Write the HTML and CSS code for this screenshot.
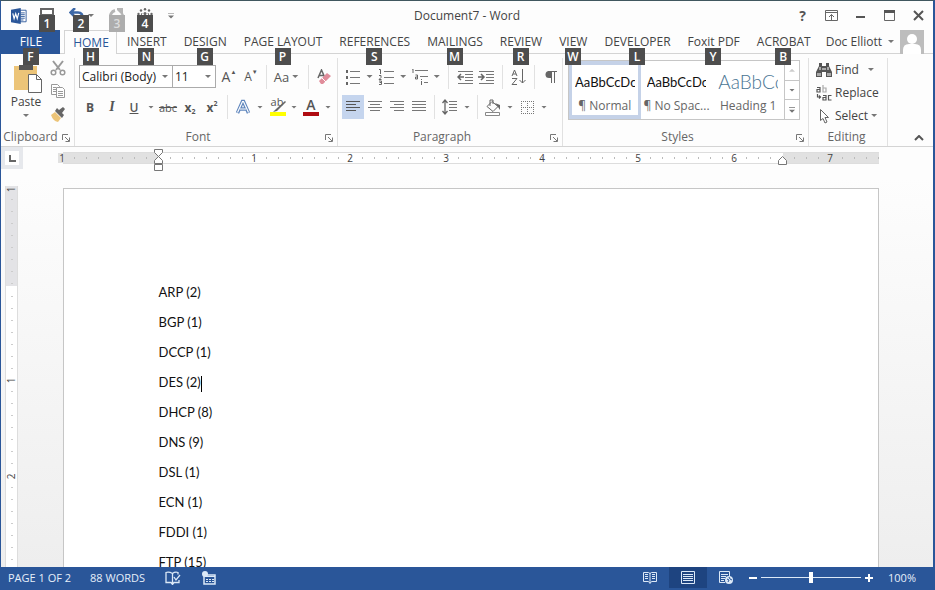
FILE: index.html
```
<!DOCTYPE html>
<html lang="en">
<head>
    <meta charset="utf-8">
    <title>Document7 - Word</title>
    <link rel="stylesheet" href="styles.css">
</head>
<body>
    <div class="window">
        <header class="titlebar">
            <div class="quick-access">
                <svg class="word-logo" width="16" height="16" viewBox="0 0 18 18">
                    <path d="M10 2.500h7v13h-7z" fill="#fff" stroke="#2a5699"/>
                    <path d="M11 5.500h4.500M11 7.500h4.500M11 9.500h4.500M11 11.500h4.500M11 13.500h3" stroke="#2a5699"/>
                    <path d="M0 2l11-2v18L0 16z" fill="#2a5699"/>
                    <path d="M2 6l1.500 6L5.300 6.500 7 12l1.700-6.500" fill="none" stroke="#fff" stroke-width="1.300"/>
                </svg>
                <button class="qa-btn" aria-label="Save">
                    <svg width="16" height="16" viewBox="0 0 16 16"><path d="M2 1h12v13H2z" fill="#fff" stroke="#666" stroke-width="2"/><path d="M3 6h10v8H3z" fill="#666"/></svg>
                    <span class="keytip">1</span>
                </button>
                <button class="qa-btn undo" aria-label="Undo">
                    <svg width="16" height="16" viewBox="0 0 16 16"><path d="M6 0L1.500 4.500 6 9M2 4.500h7c4 0 5 3 5 7" fill="none" stroke="#3c68a8" stroke-width="2.500"/></svg>
                    <span class="keytip">2</span>
                </button>
                <span class="caret"></span>
                <button class="qa-btn redo" aria-label="Redo" disabled>
                    <svg width="16" height="16" viewBox="0 0 16 16"><path d="M6 2.500a6 6 0 1 0 7 3.500" fill="none" stroke="#b5b5b5" stroke-width="3"/><path d="M8 0h6v6H12L8 2z" fill="#b5b5b5"/></svg>
                    <span class="keytip">3</span>
                </button>
                <button class="qa-btn touch" aria-label="Touch mode">
                    <svg width="16" height="16" viewBox="0 0 16 16"><g fill="#666"><circle cx="8" cy="1.200" r="1.200"/><circle cx="4" cy="2.500" r="1.200"/><circle cx="12" cy="2.500" r="1.200"/><circle cx="1.500" cy="6" r="1.200"/><circle cx="14.500" cy="6" r="1.200"/><circle cx="8" cy="5.500" r="1.500"/></g><path d="M8 6v7M5 5l-2 5M11 5l2 5" stroke="#666"/></svg>
                    <span class="keytip">4</span>
                </button>
                <button class="customize" aria-label="Customize Quick Access Toolbar"><span class="caret line"></span></button>
            </div>
            <div class="title">Document7 - Word</div>
            <div class="window-buttons">
                <button class="help" aria-label="Help">?</button>
                <button aria-label="Ribbon Display Options">
                    <svg width="13" height="11" viewBox="0 0 13 11"><path d="M.5.5h12v10H.5zM1 2.500h11M6.500 10V4.500M4 7l2.500-2.500L9 7" fill="none" stroke="#666"/></svg>
                </button>
                <button aria-label="Minimize">
                    <svg width="11" height="11" viewBox="0 0 11 11"><path d="M1 7h9" stroke="#555" stroke-width="2"/></svg>
                </button>
                <button aria-label="Maximize">
                    <svg width="11" height="11" viewBox="0 0 11 11"><path d="M.5.5h10v10H.5z" fill="none" stroke="#666"/><path d="M0 1.500h11" stroke="#555" stroke-width="3"/></svg>
                </button>
                <button aria-label="Close">
                    <svg width="11" height="11" viewBox="0 0 11 11"><path d="M1 1l9 9M10 1l-9 9" stroke="#555" stroke-width="2"/></svg>
                </button>
            </div>
        </header>

        <nav class="tabs">
            <button class="tab file">FILE<span class="keytip">F</span></button>
            <button class="tab active">HOME<span class="keytip">H</span></button>
            <button class="tab">INSERT<span class="keytip">N</span></button>
            <button class="tab">DESIGN<span class="keytip">G</span></button>
            <button class="tab">PAGE LAYOUT<span class="keytip">P</span></button>
            <button class="tab">REFERENCES<span class="keytip">S</span></button>
            <button class="tab">MAILINGS<span class="keytip">M</span></button>
            <button class="tab">REVIEW<span class="keytip">R</span></button>
            <button class="tab">VIEW<span class="keytip">W</span></button>
            <button class="tab">DEVELOPER<span class="keytip">L</span></button>
            <button class="tab">Foxit PDF<span class="keytip">Y</span></button>
            <button class="tab">ACROBAT<span class="keytip">B</span></button>
            <button class="account">Doc Elliott<span class="caret"></span>
                <svg width="24" height="24" viewBox="0 0 24 24"><path d="M0 0h24v24H0z" fill="#bdbdbd"/><circle cx="12" cy="9" r="5" fill="#fff"/><path d="M3 24v-4q0-6 6-6h6q6 0 6 6v4z" fill="#fff"/></svg>
            </button>
        </nav>

        <section class="ribbon">
            <div class="group clipboard">
                <div class="group-body">
                    <button class="paste">
                        <svg width="30" height="31" viewBox="0 0 30 31"><path d="M1 4h23v24H1z" fill="#ecc478"/><path d="M6 3h4q2.500-5 5 0h5v5H6z" fill="#555"/><path d="M15.500 12.500h8l5 5v13h-13z" fill="#fff" stroke="#666"/><path d="M23.500 12.500v5h5" fill="none" stroke="#666"/></svg>
                        <span>Paste</span>
                        <span class="caret"></span>
                    </button>
                    <div class="clip-tools">
                        <button aria-label="Cut"><svg width="16" height="16" viewBox="0 0 16 16"><path d="M3 1l7 9M13 1L6 10" stroke="#999" stroke-width="2"/><g fill="none" stroke="#999" stroke-width="1.500"><circle cx="3.500" cy="12.500" r="2.300"/><circle cx="12.500" cy="12.500" r="2.300"/></g></svg></button>
                        <button aria-label="Copy"><svg width="16" height="16" viewBox="0 0 16 16"><g fill="#fff" stroke="#999"><path d="M1.500 1.500h6l2 2v8h-8z"/><path d="M6.500 4.500h6l2 2v8h-8z"/><path d="M3 4.500h3M3 6.500h3M3 8.500h3M8 8.500h5M8 10.500h5M8 12.500h5"/></g></svg></button>
                        <button aria-label="Format Painter"><svg width="16" height="16" viewBox="0 0 16 16"><path d="M1 9l4-3 6 6-3 4q-5-1-7-7z" fill="#ecc478"/><path d="M5 5l7 7 2-3-2-2 3-4-2-2-4 3-2-2z" fill="#666"/></svg></button>
                    </div>
                </div>
                <div class="group-label">Clipboard<button class="launcher" aria-label="Clipboard settings"><svg width="8" height="8" viewBox="0 0 8 8"><path d="M.5 6V.5H6M3 3l4 4M7.500 3.500v4h-4" fill="none" stroke="#777"/></svg></button></div>
            </div>

            <div class="group font">
                <div class="group-body">
                    <div class="tool-row">
                        <label class="combo family"><select aria-label="Font"><option>Calibri (Body)</option></select></label>
                        <label class="combo size"><select aria-label="Font size"><option>11</option></select></label>
                        <button class="tool grow" aria-label="Grow Font">A<sup>&#9650;</sup></button>
                        <button class="tool shrink" aria-label="Shrink Font">A<sup>&#9660;</sup></button>
                        <span class="sep"></span>
                        <button class="tool case" aria-label="Change Case">Aa<span class="caret"></span></button>
                        <span class="sep"></span>
                        <button class="tool" aria-label="Clear Formatting"><svg width="16" height="16" viewBox="0 0 16 16"><path d="M2 9L5.500 1 9 9M3.500 6.500h4" fill="none" stroke="#666" stroke-width="1.500"/><path d="M3 12l8-8 4 3-8 8H5z" fill="#e08c9a"/><path d="M6 9l4 4" stroke="#fff"/></svg></button>
                    </div>
                    <div class="tool-row">
                        <button class="tool bold">B</button>
                        <button class="tool italic">I</button>
                        <button class="tool underline">U</button>
                        <span class="caret"></span>
                        <button class="tool strike">abc</button>
                        <button class="tool script">x<sub>2</sub></button>
                        <button class="tool script">x<sup>2</sup></button>
                        <span class="sep"></span>
                        <button class="tool" aria-label="Text Effects"><svg width="16" height="16" viewBox="0 0 16 16"><path d="M2.500 14L7.500 2.500h1L13.500 14M5 10h6" fill="none" stroke="#5f86bd" stroke-width="3.500"/><path d="M2.500 13.500L7.500 2.500h1l5 11M5 10h6" fill="none" stroke="#fff" stroke-width="1.200"/></svg></button>
                        <span class="caret"></span>
                        <button class="tool highlight" aria-label="Highlight">ab<svg width="18" height="18" viewBox="0 0 18 18"><path d="M1 14h16v4H1z" fill="#ff0"/><path d="M16 3l-9 8-3 3 4-1 9-9z" fill="#666"/></svg></button>
                        <span class="caret"></span>
                        <button class="tool color" aria-label="Font Color">A</button>
                        <span class="caret"></span>
                    </div>
                </div>
                <div class="group-label">Font<button class="launcher" aria-label="Font settings"><svg width="8" height="8" viewBox="0 0 8 8"><path d="M.5 6V.5H6M3 3l4 4M7.500 3.500v4h-4" fill="none" stroke="#777"/></svg></button></div>
            </div>

            <div class="group paragraph">
                <div class="group-body">
                    <div class="tool-row">
                        <button class="tool" aria-label="Bullets"><svg width="16" height="16" viewBox="0 0 16 16"><path d="M5 2.500h10M5 8.500h10M5 14.500h10" stroke="#777"/><path d="M1 1h2v3H1zM1 7h2v3H1zM1 13h2v3H1z" fill="#666"/></svg></button>
                        <span class="caret"></span>
                        <button class="tool" aria-label="Numbering"><svg width="16" height="16" viewBox="0 0 16 16"><path d="M6 2.500h10M6 8.500h10M6 14.500h10" stroke="#777"/><path d="M1 .5h1.500V5M1 6.500h2v2l-2 2h2.500M1 12h2.500v3.500H1M1.500 13.500h2" fill="none" stroke="#666"/></svg></button>
                        <span class="caret"></span>
                        <button class="tool" aria-label="Multilevel List"><svg width="18" height="16" viewBox="0 0 18 16"><path d="M4 1.500h13M9 7.500h8M13 13.500h4" stroke="#777"/><path d="M1 0h1v4M4.500 6h2v4h-2v-2h2M10.500 12v4M10.500 10v1" fill="none" stroke="#666"/></svg></button>
                        <span class="caret"></span>
                        <span class="sep"></span>
                        <button class="tool" aria-label="Decrease Indent"><svg width="16" height="14" viewBox="0 0 16 14"><path d="M1 1.500h15M8 4.500h8M8 7.500h8M8 10.500h8M1 13.500h15" stroke="#777"/><path d="M7 7H1.500M4 4L1 7l3 3" fill="none" stroke="#666" stroke-width="1.500"/></svg></button>
                        <button class="tool" aria-label="Increase Indent"><svg width="16" height="14" viewBox="0 0 16 14"><path d="M1 1.500h15M8 4.500h8M8 7.500h8M8 10.500h8M1 13.500h15" stroke="#777"/><path d="M0 7h5.500M3 4l3 3-3 3" fill="none" stroke="#666" stroke-width="1.500"/></svg></button>
                        <span class="sep"></span>
                        <button class="tool" aria-label="Sort"><svg width="16" height="16" viewBox="0 0 16 16"><path d="M1 7l2.500-6L6 7M2 5h3M1 9.500h5l-5 6h5M11.500 0v14M8.500 11l3 3 3-3" fill="none" stroke="#666"/></svg></button>
                        <span class="sep"></span>
                        <button class="tool" aria-label="Show marks"><svg width="12" height="14" viewBox="0 0 12 14"><path d="M6 1H4a3.500 3.500 0 0 0 0 7h2z" fill="#666"/><path d="M3 1.500h9M6.500 1v12M9.500 1v12" stroke="#666"/></svg></button>
                    </div>
                    <div class="tool-row">
                        <button class="tool selected" aria-label="Align Left"><svg width="16" height="12" viewBox="0 0 16 12"><path d="M1 .5h14M1 3.500h10M1 6.500h14M1 9.500h10" stroke="#555"/></svg></button>
                        <button class="tool" aria-label="Center"><svg width="16" height="12" viewBox="0 0 16 12"><path d="M1 .5h14M3 3.500h10M1 6.500h14M3 9.500h10" stroke="#777"/></svg></button>
                        <button class="tool" aria-label="Align Right"><svg width="16" height="12" viewBox="0 0 16 12"><path d="M1 .5h14M5 3.500h10M1 6.500h14M5 9.500h10" stroke="#777"/></svg></button>
                        <button class="tool" aria-label="Justify"><svg width="16" height="12" viewBox="0 0 16 12"><path d="M1 .5h14M1 3.500h14M1 6.500h14M1 9.500h14" stroke="#777"/></svg></button>
                        <span class="sep"></span>
                        <button class="tool" aria-label="Line Spacing"><svg width="16" height="16" viewBox="0 0 16 16"><path d="M7 2.500h8M7 5.500h8M7 8.500h8M7 11.500h8" stroke="#777"/><path d="M3 1v14M.5 4L3 1l2.500 3M.5 12L3 15l2.500-3" fill="none" stroke="#666" stroke-width="1.300"/></svg></button>
                        <span class="caret"></span>
                        <span class="sep"></span>
                        <button class="tool" aria-label="Shading"><svg width="18" height="17" viewBox="0 0 18 17"><path d="M8 2.500l6 5-5 5-6-5zM6 7V1h3v4" fill="none" stroke="#666"/><path d="M11 4l5 2v5l-2-3z" fill="#666"/><path d="M1.500 13.500h14v3h-14z" fill="#fff" stroke="#888"/></svg></button>
                        <span class="caret"></span>
                        <button class="tool" aria-label="Borders"><svg width="13" height="13" viewBox="0 0 13 13"><path d="M.5 0v13M6.500 0v13M12.500 0v13M0 .5h13M0 6.500h13M0 12.500h13" fill="none" stroke="#777" stroke-dasharray="1 1"/></svg></button>
                        <span class="caret"></span>
                    </div>
                </div>
                <div class="group-label">Paragraph<button class="launcher" aria-label="Paragraph settings"><svg width="8" height="8" viewBox="0 0 8 8"><path d="M.5 6V.5H6M3 3l4 4M7.500 3.500v4h-4" fill="none" stroke="#777"/></svg></button></div>
            </div>

            <div class="group styles">
                <div class="group-body">
                    <div class="gallery">
                        <button class="style-item current"><span class="sample">AaBbCcDc</span><span>¶ Normal</span></button>
                        <button class="style-item"><span class="sample">AaBbCcDc</span><span>¶ No Spac...</span></button>
                        <button class="style-item heading"><span class="sample">AaBbCc</span><span>Heading 1</span></button>
                        <div class="gallery-scroll">
                            <button aria-label="Row up" disabled><span class="caret up"></span></button>
                            <button aria-label="Row down"><span class="caret"></span></button>
                            <button aria-label="More"><span class="caret line"></span></button>
                        </div>
                    </div>
                </div>
                <div class="group-label">Styles<button class="launcher" aria-label="Styles settings"><svg width="8" height="8" viewBox="0 0 8 8"><path d="M.5 6V.5H6M3 3l4 4M7.500 3.500v4h-4" fill="none" stroke="#777"/></svg></button></div>
            </div>

            <div class="group editing">
                <div class="group-body">
                    <button class="edit-item"><svg width="16" height="14" viewBox="0 0 16 14"><path d="M3 0h3v3h4V0h3v3l3 6v5h-6V9H6v5H0V9l3-6z" fill="#555"/><path d="M2 10v3M4 10v3M12 10v3M14 10v3M7 5v2M9 5v2M4 4v3M12 4v3" stroke="#fff"/></svg>Find<span class="caret wide"></span></button>
                    <button class="edit-item"><svg width="16" height="16" viewBox="0 0 16 16"><g fill="none" stroke="#555" stroke-width="1.200"><path d="M1 2.500h3V7H1V4.500h3M7 10.500h3V15H7v-2.500h3M15.500 10.500h-3V15h3M1.500 9v3h3M3 10.500L4.500 12 3 13.500"/><path d="M7 0v7h3V3H7" stroke="#aaa"/></g></svg>Replace</button>
                    <button class="edit-item"><svg width="16" height="16" viewBox="0 0 16 16"><path d="M4.500 1.500v11l2.500-2 2 4.500 2-1-2-4.500h3.500z" fill="#fff" stroke="#666"/></svg>Select<span class="caret"></span></button>
                </div>
                <div class="group-label">Editing</div>
            </div>
            <button class="collapse" aria-label="Collapse the Ribbon"><svg width="10" height="6" viewBox="0 0 10 6"><path d="M1 5l4-4 4 4" fill="none" stroke="#555" stroke-width="2"/></svg></button>
        </section>

        <main class="workspace">
            <div class="left-side">
                <button class="tab-selector" aria-label="Tab stop"><svg width="7" height="7" viewBox="0 0 7 7"><path d="M1 0v6h6" fill="none" stroke="#666" stroke-width="2"/></svg></button>
                <div class="v-ruler">
                    <div class="v-inch margin"><span>1</span></div>
                    <div class="v-inch"></div>
                    <div class="v-inch"><span>1</span></div>
                    <div class="v-inch"><span>2</span></div>
                </div>
            </div>
            <div class="canvas">
                <div class="h-ruler">
                    <div class="inch margin"><span>1</span></div>
                    <div class="inch">
                        <svg class="marker" width="10" height="22" viewBox="0 0 10 22"><path d="M.5.5h8v3l-4 4-4-4zM.5 14.500v-3l4-4 4 4v3zM.5 15.500h8v6h-8z" fill="#fff" stroke="#777"/></svg>
                    </div>
                    <div class="inch"><span>1</span></div>
                    <div class="inch"><span>2</span></div>
                    <div class="inch"><span>3</span></div>
                    <div class="inch"><span>4</span></div>
                    <div class="inch"><span>5</span></div>
                    <div class="inch half"><span>6</span></div>
                    <div class="inch margin last"><span>7</span>
                        <svg class="marker right" width="10" height="22" viewBox="0 0 10 22"><path d="M.5 15.500v-4l4-4 4 4v4z" fill="#fff" stroke="#777"/></svg>
                    </div>
                </div>
                <article class="page">
                    <p>ARP (2)</p>
                    <p>BGP (1)</p>
                    <p>DCCP (1)</p>
                    <p>DES (2)<span class="cursor"></span></p>
                    <p>DHCP (8)</p>
                    <p>DNS (9)</p>
                    <p>DSL (1)</p>
                    <p>ECN (1)</p>
                    <p>FDDI (1)</p>
                    <p>FTP (15)</p>
                </article>
            </div>
        </main>

        <footer class="statusbar">
            <span>PAGE 1 OF 2</span>
            <span class="words">88 WORDS</span>
            <button class="status-btn" aria-label="Proofing"><svg width="16" height="14" viewBox="0 0 16 14"><path d="M7.500 13V2.500Q4 .5 1 1.500v10h5l1.500 2 1.500-2h5V9M7.500 2.500Q10 .5 13 1.500v2M9 6l2 3 4-5" fill="none" stroke="#dce9f7" stroke-width="1.300"/></svg></button>
            <button class="status-btn" aria-label="Macros"><svg width="14" height="14" viewBox="0 0 14 14"><path d="M2 4h11v9H2z" fill="none" stroke="#dce9f7" stroke-width="1.500"/><path d="M3 5.500h10M4 8.500h2M7 8.500h2M10 8.500h2M4 10.500h2M7 10.500h2M10 10.500h2" stroke="#dce9f7"/><circle cx="3" cy="3" r="3" fill="#dce9f7"/></svg></button>
            <div class="views">
                <button aria-label="Read Mode"><svg width="14" height="13" viewBox="0 0 14 13"><path d="M.5 1.500h5l1.500 1 1.500-1h5v9h-5l-1.500 2-1.500-2h-5zM7 2v10M2 3.500h3M2 5.500h3M2 7.500h3M9 3.500h3M9 5.500h3M9 7.500h3" fill="none" stroke="#dce9f7"/></svg></button>
                <button class="current" aria-label="Print Layout"><svg width="14" height="13" viewBox="0 0 14 13"><path d="M.5.5h13v12H.5zM2 3.500h10M2 5.500h10M2 7.500h10M2 9.500h10" fill="none" stroke="#dce9f7"/></svg></button>
                <button aria-label="Web Layout"><svg width="14" height="13" viewBox="0 0 14 13"><path d="M6 11.500H.5V.5h10V5M2 3.500h7M2 5.500h5M2 7.500h4M2 9.500h3" fill="none" stroke="#dce9f7"/><circle cx="10" cy="9" r="4" fill="#dce9f7"/><path d="M8 8l2 1-1 2M10 6l1 2 2 1" fill="none" stroke="#2a5699"/></svg></button>
            </div>
            <button class="zoom-btn minus" aria-label="Zoom out"></button>
            <input type="range" class="zoom" aria-label="Zoom" min="0" max="200" value="100">
            <button class="zoom-btn plus" aria-label="Zoom in"></button>
            <button class="percent">100%</button>
        </footer>
    </div>
</body>
</html>
```
FILE: styles.css
```
* {
    box-sizing: border-box;
}

body {
    margin: 0;
    font-family: "Open Sans", "Noto Sans", sans-serif;
    font-size: 12px;
    color: #444;
}

button {
    position: relative;
    display: flex;
    align-items: center;
    justify-content: center;
    padding: 0;
    border: 0;
    background: none;
    font: inherit;
    color: inherit;
    white-space: nowrap;
}

svg {
    display: block;
    flex: none;
}

.window {
    display: flex;
    flex-direction: column;
    height: 100vh;
    overflow: hidden;
    border: 1px solid #2a5699;
    border-top-color: #40575f;
    border-right-width: 2px;
    border-bottom: 0;
    background: #fdfdfd;
}

.caret {
    flex: none;
    width: 12px;
    height: 3px;
    background: #777;
    clip-path: polygon(3px 0, 9px 0, 6px 3px);
}

.caret.up {
    background: #ccc;
    clip-path: polygon(3px 3px, 9px 3px, 6px 0);
}

.caret.line {
    height: 6px;
    clip-path: polygon(3px 0, 9px 0, 9px 1px, 3px 1px, 3px 3px, 9px 3px, 6px 6px, 3px 3px, 3px 1px);
}

.keytip {
    position: absolute;
    left: 50%;
    top: 18px;
    z-index: 2;
    width: 16px;
    height: 17px;
    margin-left: -8px;
    background: #4d4d4d;
    color: #fff;
    font-size: 12px;
    font-weight: 600;
    line-height: 17px;
    text-align: center;
}

/* Title bar */
.titlebar {
    display: grid;
    grid-template-columns: 1fr auto 1fr;
    align-items: center;
    height: 29px;
    flex: none;
}

.quick-access {
    display: flex;
    align-items: center;
    padding-left: 10px;
}

.qa-btn {
    width: 16px;
    height: 16px;
    margin-left: 12px;
}

.qa-btn.undo {
    margin-left: 14px;
}

.qa-btn .keytip {
    top: 7px;
}

.qa-btn.undo .keytip {
    left: 12px;
}

.qa-btn.redo .keytip {
    background: #adadad;
    color: #ddd;
}

.customize {
    margin-left: 12px;
}

.window-buttons {
    display: flex;
    justify-content: flex-end;
}

.window-buttons button {
    width: 29px;
    height: 28px;
}

.window-buttons .help {
    font-size: 14px;
    font-weight: 700;
    color: #555;
}

/* Tabs */
.tabs {
    display: flex;
    height: 24px;
    flex: none;
    border-bottom: 1px solid #d4d4d4;
}

.tab {
    height: 24px;
    padding: 0 8px 1px 9px;
}

.tab.file {
    width: 59px;
    margin-right: 4px;
    background: #2a5699;
    color: #fff;
}

.tab.active {
    width: 53px;
    margin-right: 1px;
    border: 1px solid #d4d4d4;
    border-bottom: 0;
    background: #fdfdfd;
    color: #2a5699;
}

.tab.active .keytip {
    top: 17px;
}

.account {
    gap: 3px;
    margin-left: auto;
    margin-right: 9px;
}

/* Ribbon */
.ribbon {
    display: flex;
    height: 93px;
    flex: none;
    border-bottom: 1px solid #d4d4d4;
}

.group {
    display: flex;
    flex-direction: column;
    flex: none;
    margin-top: 4px;
    border-right: 1px solid #e1e1e1;
}

.group-body {
    flex: none;
    height: 70px;
}

.group-label {
    position: relative;
    height: 18px;
    line-height: 18px;
    padding-right: 16px;
    text-align: center;
    color: #666;
}

.launcher {
    position: absolute;
    right: 4px;
    top: 6px;
}

.clipboard {
    width: 74px;
}

.clipboard .group-label {
    padding-right: 14px;
}

.clipboard .group-body {
    display: flex;
    padding-left: 4px;
}

.paste {
    flex-direction: column;
    justify-content: flex-start;
    width: 42px;
    padding-top: 4px;
}

.paste svg {
    margin-left: 4px;
}

.paste .caret {
    margin-top: 4px;
}

.clip-tools {
    display: flex;
    flex-direction: column;
    gap: 7px;
    padding: 2px 0 0 3px;
}

.tool-row {
    display: flex;
    align-items: center;
    height: 31px;
}

.tool-row + .tool-row {
    height: 30px;
}

.font {
    width: 263px;
}

.font .group-body,
.paragraph .group-body {
    padding: 3px 0 0 4px;
}

.combo {
    position: relative;
    display: flex;
    align-items: center;
    height: 23px;
    border: 1px solid #ababab;
    background: #fff;
}

.combo.family {
    width: 94px;
}

.combo.size {
    width: 43px;
    margin-right: 2px;
    border-left: 0;
}

.combo select {
    width: 100%;
    padding: 0 0 0 2px;
    border: 0;
    appearance: none;
    background: none;
    font: inherit;
    color: #222;
}

.combo::after {
    content: "";
    position: absolute;
    right: 4px;
    width: 6px;
    height: 3px;
    background: #777;
    clip-path: polygon(0 0, 6px 0, 3px 3px);
}

.tool {
    width: 22px;
    height: 24px;
    color: #555;
}

.tool.selected {
    background: #c5d5ee;
}

.sep {
    width: 1px;
    height: 24px;
    margin: 0 5px;
    background: #e1e1e1;
}

.font .sep,
.paragraph .tool-row + .tool-row .sep {
    margin: 0 4px;
}

.grow,
.shrink {
    font-size: 14px;
}

.grow sup,
.shrink sup {
    font-size: 6px;
    line-height: 6px;
    margin-bottom: 10px;
}

.shrink {
    font-size: 12px;
}

.case {
    width: 33px;
    font-size: 13px;
}

.bold {
    font-weight: 700;
}

.italic {
    font-family: "Liberation Serif", serif;
    font-size: 14px;
    font-style: italic;
    font-weight: 700;
}

.underline {
    font-weight: 600;
    text-decoration: underline;
}

.strike {
    font-size: 11px;
    text-decoration: line-through;
}

.script {
    font-weight: 700;
}

.script sub,
.script sup {
    font-size: 7px;
    line-height: 7px;
}

.script sub {
    margin-top: 9px;
}

.script sup {
    margin-bottom: 8px;
}

.highlight {
    align-items: flex-start;
    font-size: 11px;
    line-height: 14px;
}

.highlight svg {
    position: absolute;
    left: 3px;
    top: 3px;
}

.color {
    height: 18px;
    border-bottom: 4px solid #b00c12;
    width: 16px;
    margin: 0 3px;
    font-size: 14px;
    font-weight: 600;
    line-height: 14px;
}

.paragraph {
    width: 225px;
}

.styles {
    width: 246px;
}

.styles .group-body {
    padding: 2px 8px 0 5px;
}

.gallery {
    display: flex;
    height: 60px;
    border: 1px solid #c6c6c6;
    background: #fff;
}

.style-item {
    flex-direction: column;
    gap: 6px;
    flex: 1;
    min-width: 0;
    padding: 7px 3px 0;
    border: 4px solid transparent;
    border-width: 4px 3px;
    color: #666;
}

.style-item.current {
    border-color: #c5d2e8;
}

.sample {
    width: 100%;
    overflow: hidden;
    font-family: Lato, sans-serif;
    font-size: 13px;
    line-height: 18px;
    text-align: left;
    color: #111;
}

.heading .sample {
    font-size: 19px;
    font-weight: 300;
    color: #4a7593;
}

.gallery-scroll {
    display: flex;
    flex-direction: column;
    width: 15px;
    border-left: 1px solid #c6c6c6;
}

.gallery-scroll button {
    flex: 1;
    width: 14px;
    overflow: hidden;
}

.gallery-scroll button + button {
    border-top: 1px solid #c6c6c6;
}

.editing {
    width: 79px;
}

.editing .group-label {
    padding-right: 3px;
}

.edit-item {
    height: 23px;
    gap: 3px;
    padding-left: 7px;
}

.edit-item .caret {
    margin-left: -3px;
}

.edit-item .caret.wide {
    margin-left: 3px;
}

.collapse {
    align-self: flex-end;
    margin: 0 9px 5px auto;
}

/* Document area */
.workspace {
    display: grid;
    grid-template-columns: 27px 1fr;
    flex: 1;
    min-height: 0;
    overflow: hidden;
    background: linear-gradient(#fdfdfd 30px, #eee);
}

.tab-selector {
    width: 22px;
    height: 22px;
    margin-bottom: 17px;
    border: 4px solid #e6e8ec;
    background: #fff;
}

.v-ruler {
    width: 13px;
    margin-left: 4px;
    background: #fff;
    border: solid #ddd;
    border-width: 0 1px;
}

.v-inch,
.inch {
    position: relative;
    font-size: 10px;
    color: #444;
}

.v-inch {
    height: 96px;
    background: repeating-linear-gradient(transparent 0 11px, #ccc 11px 12px) center / 2px 96px no-repeat;
}

.v-inch.margin {
    height: 100px;
    background-color: #e3e3e6;
}

.v-inch span {
    position: absolute;
    left: 0;
    top: -5px;
    width: 11px;
    height: 11px;
    line-height: 11px;
    text-align: center;
    transform: rotate(-90deg);
}

.v-inch.margin span {
    top: -2px;
}

.v-inch:nth-child(2) {
    height: 94px;
}

.canvas {
    padding: 5px 20px 0 0;
    overflow: hidden;
}

.h-ruler {
    display: flex;
    width: 816px;
    height: 12px;
    margin: 0 auto 24px;
    background: #fff;
    border: solid #ddd;
    border-width: 1px 0;
}

.inch {
    width: 96px;
    background: repeating-linear-gradient(to right, transparent 0 11px, #bbb 11px 12px) center / 96px 2px no-repeat;
}

.inch.half {
    width: 48px;
}

.inch.margin {
    background-color: #e1e1e1;
}

.inch span {
    position: absolute;
    left: -5px;
    top: 0;
    width: 9px;
    line-height: 10px;
    text-align: center;
    background: inherit;
    background-image: none;
}

.inch.last span {
    left: 43px;
}

.marker {
    position: absolute;
    left: -5px;
    top: -4px;
    z-index: 1;
}

.page {
    width: 816px;
    min-height: 1056px;
    margin: 0 auto;
    padding: 88px 95px;
    border: 1px solid #c6c6c6;
    background: #fff;
    font-family: Lato, sans-serif;
    font-size: 13px;
    line-height: 30px;
    color: #111;
}

.page p {
    margin: 0;
}

.cursor {
    display: inline-block;
    width: 1px;
    height: 16px;
    vertical-align: middle;
    background: #000;
}

/* Status bar */
.statusbar {
    display: flex;
    align-items: center;
    height: 23px;
    flex: none;
    padding: 0 9px 2px 7px;
    background: #2a5699;
    color: #e6eff9;
    font-size: 11px;
}

.words {
    margin-left: 19px;
}

.status-btn {
    width: 16px;
    margin-left: 20px;
}

.views {
    display: flex;
    margin-left: auto;
}

.views button {
    width: 38px;
    height: 21px;
}

.views .current {
    background: #1e4480;
}

.zoom-btn {
    width: 8px;
    height: 8px;
    background: linear-gradient(#fff, #fff) center / 8px 2px no-repeat;
}

.zoom-btn.plus {
    background: linear-gradient(#fff, #fff) center / 8px 2px no-repeat, linear-gradient(#fff, #fff) center / 2px 8px no-repeat;
}

.zoom-btn.minus {
    margin-left: 4px;
}

.zoom {
    width: 100px;
    height: 12px;
    margin: 0 4px;
    appearance: none;
    background: linear-gradient(#dce9f7, #dce9f7) center / 100% 1px no-repeat;
}

.zoom::-webkit-slider-thumb {
    appearance: none;
    width: 4px;
    height: 11px;
    background: #fff;
}

.percent {
    width: 44px;
    margin-left: 7px;
}
```
